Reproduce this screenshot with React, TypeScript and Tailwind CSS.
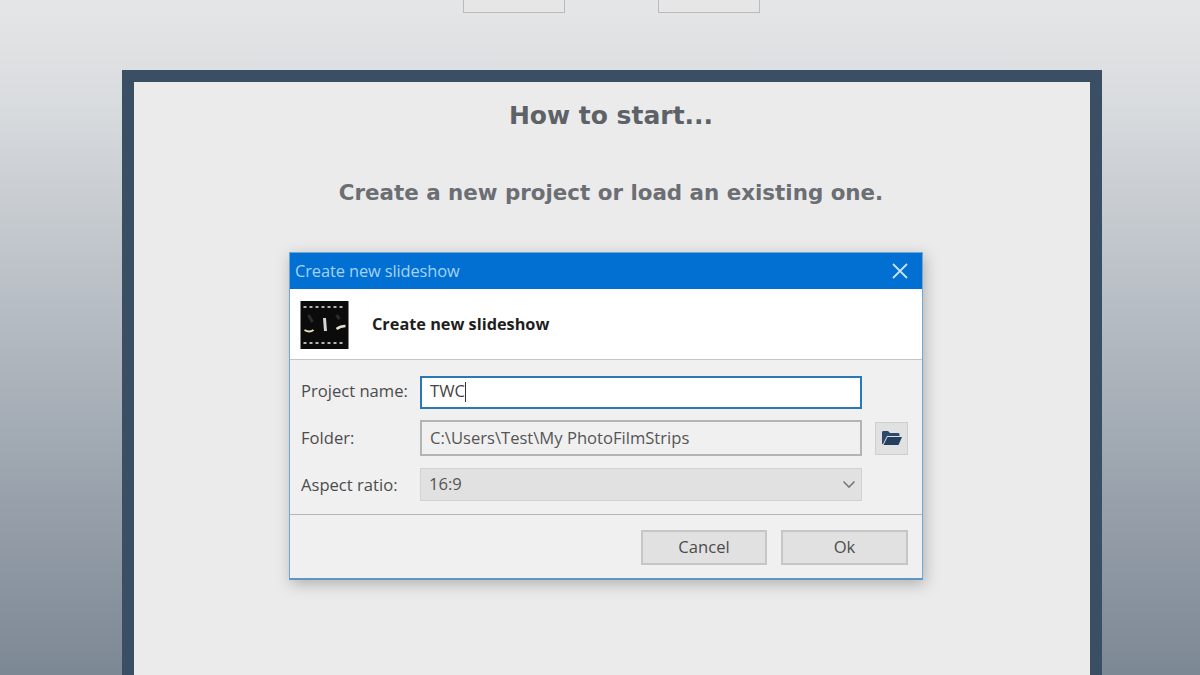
export default function App() {
  const ui = "font-['Open_Sans',sans-serif]";
  return (
    <div className={`w-[1200px] h-[675px] overflow-hidden bg-gradient-to-b from-[#e5e6e7] via-[#d9dcdf] via-[15%] to-[#7d8895] ${ui}`}>
      <div className="flex h-[70px] pl-[463px] gap-[93px] items-start">
        <div className="w-[102px] h-[13px] bg-[#e6e6e6] border border-t-0 border-[#b9babb]" />
        <div className="w-[102px] h-[13px] bg-[#e6e6e6] border border-t-0 border-[#b9babb]" />
      </div>
      <div className="ml-[122px] w-[980px] h-[640px] border-[12px] border-[#3a4e64] bg-[#ebebec] flex flex-col">
        <h1 className="mt-[15px] pr-[2px] text-center text-[25px] leading-[38px] font-bold text-[#5d6266] font-['DejaVu_Sans',sans-serif]">How to start...</h1>
        <p className="mt-[39px] pr-[2px] text-center text-[21.4px] leading-[38px] font-bold text-[#6b6e72] font-['DejaVu_Sans',sans-serif]">Create a new project or load an existing one.</p>
        <div className="mt-[40px] ml-[155px] w-[634px] h-[328px] bg-[#f0f0f0] border border-[#6fa8d4] border-b-2 border-b-[#5f95bf] shadow-[2px_4px_14px_rgba(0,0,0,0.25)] flex flex-col">
          <div className="h-[36px] bg-[#0170d2] flex items-center justify-between pl-[5px] pr-[14px] shrink-0">
            <span className="text-[16.4px] tracking-[-0.1px] text-[#a6d3f5] leading-none">Create new slideshow</span>
            <svg width="16" height="16" viewBox="0 0 16 16" fill="none" stroke="#c3e2f8" strokeWidth="1.8"><path d="M1 1 15 15M15 1 1 15" /></svg>
          </div>
          <div className="h-[71px] bg-white border-b border-[#c4c4c4] flex items-center pl-[10px] gap-[23px] shrink-0">
            <svg className="mt-[2px]" width="49" height="48" viewBox="0 0 48 48">
              <rect width="48" height="48" fill="#0b0b0b" />
              <path d="M3 5h3v2H3zM9 5h3v2H9zM15 5h3v2h-3zM21 5h3v2h-3zM27 5h3v2h-3zM33 5h3v2h-3zM39 5h3v2h-3zM3 41h3v2H3zM9 41h3v2H9zM15 41h3v2h-3zM21 41h3v2h-3zM27 41h3v2h-3zM33 41h3v2h-3zM39 41h3v2h-3z" fill="#b5b5b5" />
              <path d="M4 29q5 3 9 0" stroke="#e9dfb8" strokeWidth="2" fill="none" />
              <path d="M24 17l1 13" stroke="#d4d4d4" strokeWidth="3" fill="none" />
              <path d="M36 28q4-3 9-3" stroke="#e5e0c8" strokeWidth="2.4" fill="none" />
              <path d="M8 14l4 7M36 14l3 4" stroke="#2b2b2b" strokeWidth="3" fill="none" />
            </svg>
            <span className="text-[16.3px] font-bold text-[#1e1e1e] leading-none">Create new slideshow</span>
          </div>
          <div className="grid grid-cols-[119px_442px_auto] pl-[11px] pt-[16px] items-center shrink-0 h-[155px] content-start gap-y-[11px] border-b border-[#b4b6b7] text-[16.6px] text-[#4c4c4c]">
            <span className="mb-[2px]">Project name:</span>
            <div className="h-[33px] bg-white border-2 border-[#2a79b4] pl-[8px] pb-[2px] flex items-center text-[#444]">TWC<span className="w-px h-[20px] bg-[#333]" /></div>
            <span />
            <span>Folder:</span>
            <div className="h-[36px] bg-[#f0f0f0] border-2 border-[#b4b4b4] pl-[8px] flex items-center text-[#555]">C:\Users\Test\My PhotoFilmStrips</div>
            <div className="ml-[13px] w-[33px] h-[33px] bg-[#e1e1e1] border border-[#cfcfcf] flex items-center justify-center">
              <svg width="22" height="18" viewBox="0 0 22 18"><path d="M1 3.5C1 2.5 1.600 2 2.500 2H7l2 2h8c1 0 1.500.6 1.500 1.500V7H6L2 15H1z" fill="#2d4a6c" /><path d="M6.500 8H21l-3.500 8H2.500z" fill="#23405f" /></svg>
            </div>
            <span className="mt-[2px]">Aspect ratio:</span>
            <div className="mt-[1px] h-[33px] bg-[#e1e1e1] border border-[#d2d2d2] pl-[8px] pr-[5px] flex items-center justify-between text-[#555]">
              16:9
              <svg width="14" height="9" viewBox="0 0 14 9" fill="none" stroke="#7a7a7a" strokeWidth="1.6"><path d="M1.500 1.500l5.500 5.500 5.500-5.500" /></svg>
            </div>
            <span />
          </div>
          <div className="flex-1 flex justify-end items-start gap-[14px] pt-[15px] pr-[14px] text-[16.6px] text-[#4c4c4c]">
            <button className="w-[126px] h-[35px] bg-[#e1e1e1] border-2 border-[#c6c6c6]">Cancel</button>
            <button className="w-[127px] h-[35px] bg-[#e1e1e1] border-2 border-[#c6c6c6]">Ok</button>
          </div>
        </div>
      </div>
    </div>
  );
}
